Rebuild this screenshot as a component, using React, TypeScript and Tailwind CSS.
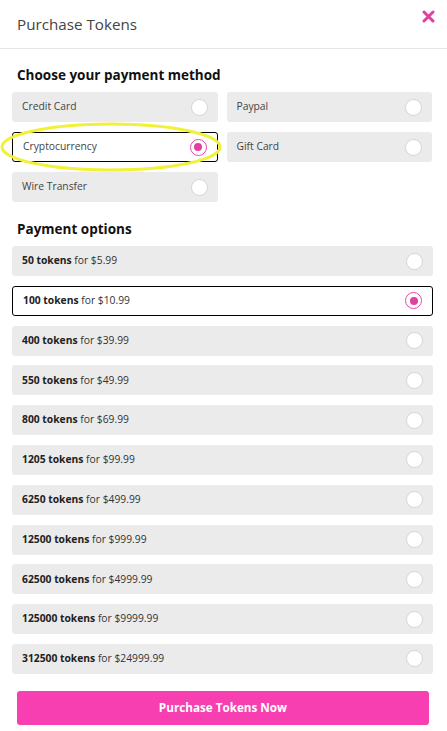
import { useState } from "react";

const methods = ["Credit Card", "Paypal", "Cryptocurrency", "Gift Card", "Wire Transfer"];

const options = [
  ["50", "5.99"],
  ["100", "10.99"],
  ["400", "39.99"],
  ["550", "49.99"],
  ["800", "69.99"],
  ["1205", "99.99"],
  ["6250", "499.99"],
  ["12500", "999.99"],
  ["62500", "4999.99"],
  ["125000", "9999.99"],
  ["312500", "24999.99"],
];

function Radio({ on }: { on: boolean }) {
  return (
    <span
      className={
        "flex h-[17px] w-[17px] items-center justify-center rounded-full border bg-white " +
        (on ? "border-[#e449a8]" : "border-[#d4d4d4]")
      }
    >
      {on && <span className="h-[8px] w-[8px] rounded-full bg-[#e0409f]" />}
    </span>
  );
}

export default function App() {
  const [method, setMethod] = useState("Cryptocurrency");
  const [option, setOption] = useState("100");

  return (
    <div className="relative min-h-[731px] w-[447px] bg-white text-[#333] [font-family:'Open_Sans',sans-serif]">
      <header className="flex h-[49px] items-start justify-between border-b border-[#e5e5e5] pl-[17px] pr-[12px]">
        <h1 className="pt-[12px] text-[15.2px] leading-[24px] text-[#444]">Purchase Tokens</h1>
        <button className="pt-[10px] text-[#e0409f]">
          <svg width="13" height="13" viewBox="0 0 13 13">
            <path d="M2 2L11 11M11 2L2 11" stroke="currentColor" strokeWidth="3" strokeLinecap="round" />
          </svg>
        </button>
      </header>

      <section className="px-[12px] pt-[17px]">
        <h2 className="pl-[5px] text-[13.5px] font-bold leading-[18px] text-[#111]">Choose your payment method</h2>
        <div className="mt-[8px] grid grid-cols-2 gap-x-[9px] gap-y-[10px] pr-[3px]">
          {methods.map((m) => {
            const on = m === method;
            return (
              <button
                key={m}
                onClick={() => setMethod(m)}
                className={
                  "flex h-[30px] items-center justify-between rounded-[3px] pl-[10px] pr-[10px] text-[10.3px] text-[#444] " +
                  (on ? "border border-black bg-white" : "bg-[#ebebeb]")
                }
              >
                <span>{m}</span>
                <Radio on={on} />
              </button>
            );
          })}
        </div>

        <h2 className="mt-[18px] pl-[5px] text-[13.5px] font-bold leading-[18px] text-[#111]">Payment options</h2>
        <div className="mt-[8px] flex flex-col gap-[9.8px] pr-[2px]">
          {options.map(([t, p]) => {
            const on = t === option;
            return (
              <button
                key={t}
                onClick={() => setOption(t)}
                className={
                  "flex h-[30px] items-center justify-between rounded-[3px] pl-[10px] pr-[10px] text-[10.3px] text-[#333] " +
                  (on ? "border border-black bg-white" : "bg-[#ebebeb]")
                }
              >
                <span>
                  <b className="font-bold text-[#222]">{t} tokens</b> for ${p}
                </span>
                <Radio on={on} />
              </button>
            );
          })}
        </div>

        <button className="mx-[5px] mt-[17px] flex h-[34px] w-[412px] items-center justify-center rounded-[3px] bg-[#f83fb1] text-[11.7px] font-bold text-white">
          Purchase Tokens Now
        </button>
      </section>

      <svg className="pointer-events-none absolute left-0 top-[121px]" width="226" height="52" viewBox="0 0 226 52">
        <ellipse cx="111" cy="26" rx="109" ry="23" fill="none" stroke="#f2f03a" strokeWidth="3" />
      </svg>
    </div>
  );
}
